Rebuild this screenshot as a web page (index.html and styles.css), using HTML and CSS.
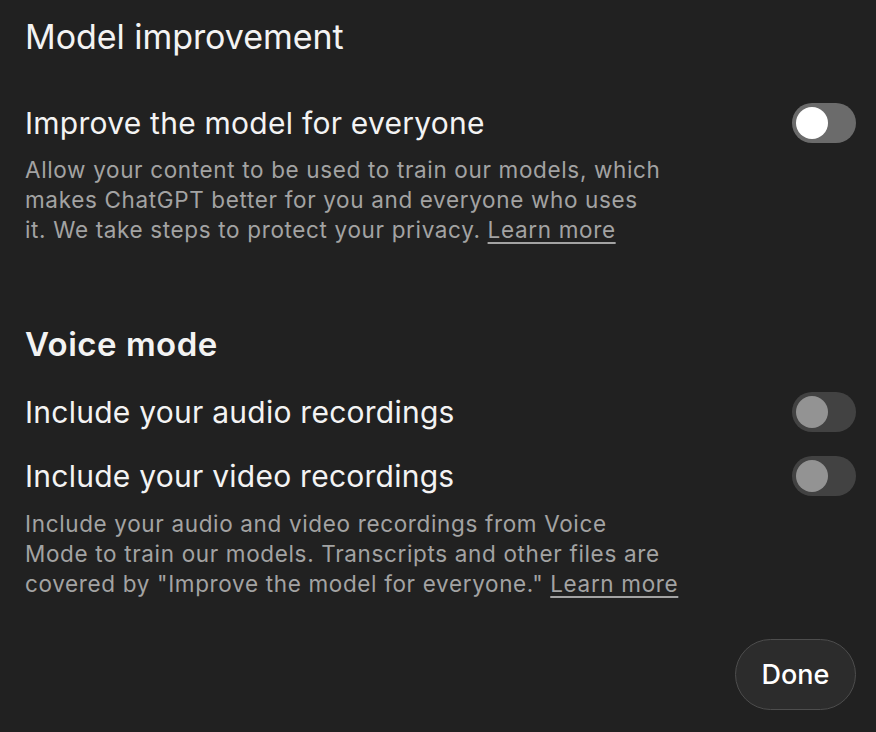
FILE: index.html
```html
<!DOCTYPE html>
<html>
<head>
<meta charset="utf-8">
<link rel="stylesheet" href="styles.css">
</head>
<body>
<div class="sheet">
  <h1 class="title">Model improvement</h1>

  <section class="group group-first">
    <div class="row">
      <span class="label">Improve the model for everyone</span>
      <span class="toggle toggle-on"><span class="knob"></span></span>
    </div>
    <p class="desc">Allow your content to be used to train our models, which<br>makes ChatGPT better for you and everyone who uses<br>it. We take steps to protect your privacy. <a class="link" href="#">Learn more</a></p>
  </section>

  <section class="group group-voice">
    <h2 class="heading">Voice mode</h2>
    <div class="row row-audio">
      <span class="label">Include your audio recordings</span>
      <span class="toggle toggle-disabled"><span class="knob"></span></span>
    </div>
    <div class="row row-video">
      <span class="label">Include your video recordings</span>
      <span class="toggle toggle-disabled"><span class="knob"></span></span>
    </div>
    <p class="desc desc-voice">Include your audio and video recordings from Voice<br>Mode to train our models. Transcripts and other files are<br>covered by "Improve the model for everyone." <a class="link" href="#">Learn more</a></p>
  </section>

  <div class="actions">
    <button class="done">Done</button>
  </div>
</div>
</body>
</html>
```

FILE: styles.css
```css
* { box-sizing: border-box; }
html, body {
  margin: 0;
  padding: 0;
  background: #212121;
}
body {
  font-family: Inter, "Noto Sans", sans-serif;
  color: #f3f3f3;
  width: 876px;
  height: 732px;
  overflow: hidden;
}
.sheet {
  padding: 17px 20px 0 25px;
  display: flex;
  flex-direction: column;
}
.title {
  margin: 0;
  font-size: 34px;
  font-weight: 400;
  line-height: 40px;
  letter-spacing: -0.05px;
}
.group-first {
  margin-top: 46px;
}
.row {
  display: flex;
  align-items: center;
  justify-content: space-between;
  height: 40px;
}
.label {
  font-size: 30px;
  font-weight: 400;
  letter-spacing: 0.25px;
}
.toggle {
  width: 64px;
  height: 40px;
  border-radius: 20px;
  padding: 4px;
  display: flex;
  flex-shrink: 0;
}
.knob {
  width: 32px;
  height: 32px;
  border-radius: 50%;
}
.toggle-on { background: #6b6b6b; }
.toggle-on .knob { background: #ffffff; }
.toggle-disabled { background: #424242; }
.toggle-disabled .knob { background: #939393; }
.desc {
  margin: 12px 0 0;
  font-size: 22.5px;
  line-height: 30px;
  letter-spacing: 0.65px;
  color: #a3a3a3;
  white-space: nowrap;
}
.link {
  color: #a3a3a3;
  text-decoration: underline;
  text-underline-offset: 4px;
  text-decoration-thickness: 1.5px;
}
.group-voice {
  margin-top: 79px;
}
.heading {
  margin: 0 0 28px;
  font-size: 33px;
  font-weight: 600;
  line-height: 40px;
  letter-spacing: 0.5px;
}
.row-video {
  margin-top: 24px;
}
.desc-voice {
  margin-top: 13px;
}
.actions {
  display: flex;
  justify-content: flex-end;
  margin-top: 40px;
}
.done {
  width: 121px;
  height: 71px;
  border-radius: 36px;
  border: 1.5px solid #4d4d4d;
  background: #2c2c2c;
  color: #ffffff;
  font-family: Inter, "Noto Sans", sans-serif;
  font-size: 27px;
  font-weight: 500;
  padding: 0;
}
```
